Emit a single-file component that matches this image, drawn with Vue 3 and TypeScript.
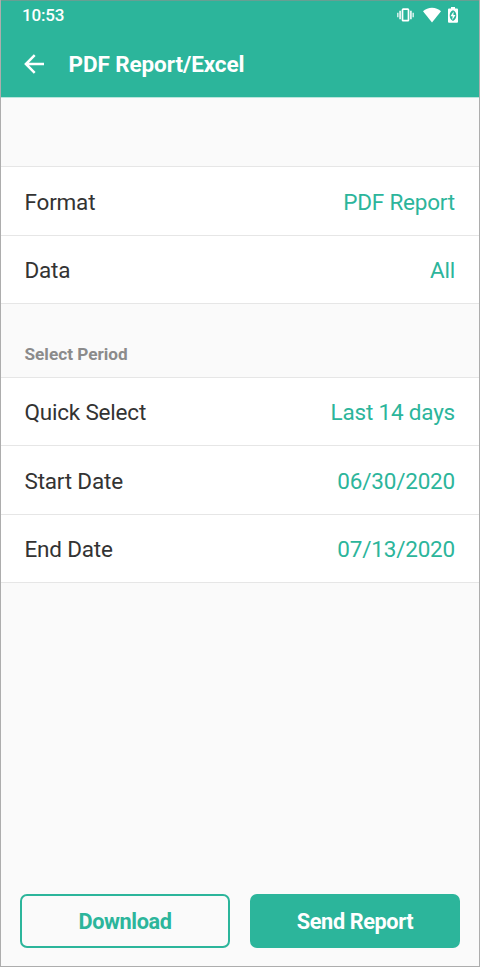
<script setup lang="ts">
interface Row {
  label: string
  value: string
}

const exportRows: Row[] = [
  { label: 'Format', value: 'PDF Report' },
  { label: 'Data', value: 'All' },
]

const periodRows: Row[] = [
  { label: 'Quick Select', value: 'Last 14 days' },
  { label: 'Start Date', value: '06/30/2020' },
  { label: 'End Date', value: '07/13/2020' },
]
</script>

<template>
  <div class="screen">
    <header class="header">
      <div class="status">
        <span class="time">10:53</span>
        <div class="status-icons">
          <svg class="vibrate" width="18" height="14" viewBox="0 0 18 14" fill="none" stroke="#fff">
            <rect x="5.500" y="1.200" width="6" height="11.400" rx="0.7" stroke-width="1.700" />
            <path d="M3.100 2.800v8.400M13.900 2.800v8.400" stroke-width="1.700" opacity=".9" />
            <path d="M.800 4.700v4.600M16.200 4.700v4.600" stroke-width="1.500" opacity=".8" />
          </svg>
          <svg class="wifi" width="18" height="16" viewBox="0 0 18 16" fill="#fff">
            <path d="M9 15.400 0 4.200C2.500 1.900 5.500.7 9 .7s6.500 1.200 9 3.500z" />
          </svg>
          <svg class="battery" width="10" height="16" viewBox="0 0 10 16">
            <path
              fill="#fff"
              fill-rule="evenodd"
              d="M3 0h4v1.500h2q1 0 1 1v12.300q0 1-1 1H1q-1 0-1-1V2.500q0-1 1-1h2zM5 3.300C2.800 4.200 1.700 6.200 1.700 8.600S2.800 13.200 5 14.100C7.200 13.200 8.300 11 8.300 8.600S7.200 4.200 5 3.300z"
            />
            <path fill="#fff" d="M5.600 4.500 2.500 9.200h2.100l-.3 3.800 3.200-4.900H5.400z" />
          </svg>
        </div>
      </div>
      <div class="toolbar">
        <svg class="back" width="20" height="20" viewBox="0 0 20 20" fill="none" stroke="#fff" stroke-width="2.500">
          <path d="M20 10H2M10.700 1.200 1.900 10l8.800 8.800" />
        </svg>
        <h1 class="title">PDF Report/Excel</h1>
      </div>
    </header>

    <main class="content">
      <section class="group export">
        <div v-for="row in exportRows" :key="row.label" class="row">
          <span>{{ row.label }}</span>
          <span class="value">{{ row.value }}</span>
        </div>
      </section>
      <h2 class="section-title">Select Period</h2>
      <section class="group">
        <div v-for="row in periodRows" :key="row.label" class="row">
          <span>{{ row.label }}</span>
          <span class="value">{{ row.value }}</span>
        </div>
      </section>
    </main>

    <footer class="actions">
      <button class="button outline" type="button">Download</button>
      <button class="button solid" type="button">Send Report</button>
    </footer>
  </div>
</template>

<style>
body {
  margin: 0;
}
</style>

<style scoped>
.screen {
  box-sizing: border-box;
  width: 480px;
  height: 967px;
  display: flex;
  flex-direction: column;
  border: 1px solid #adadad;
  background: #fafafa;
  color: #333;
  font-family: Roboto, sans-serif;
}
.header {
  box-sizing: border-box;
  height: 97px;
  flex: none;
  margin-top: -1px;
  border-top: 1px solid #679f93;
  background: #2cb59b;
  color: #fff;
  box-shadow: 0 1px 0 #b9e5dc;
}
.status {
  display: flex;
  justify-content: space-between;
  height: 30px;
  padding: 0 21px;
}
.time {
  font: 500 17px/28px Roboto, sans-serif;
  letter-spacing: -0.200px;
}
.status-icons {
  display: flex;
  align-items: center;
  padding-bottom: 2px;
}
.wifi {
  margin-left: 8px;
}
.battery {
  margin-left: 7px;
}
.toolbar {
  display: flex;
  align-items: center;
  height: 66px;
  padding-left: 23px;
}
.title {
  margin: 0 0 0 24.500px;
  font-size: 22.500px;
  font-weight: 700;
  line-height: 30px;
  letter-spacing: -0.100px;
}
.content {
  flex: 1;
}
.export {
  margin-top: 69px;
}
.group {
  border-top: 1px solid #e6e6e6;
}
.row {
  box-sizing: border-box;
  height: 68.500px;
  display: flex;
  align-items: center;
  justify-content: space-between;
  padding: 2px 24px 0 23.500px;
  border-bottom: 1px solid #e6e6e6;
  background: #fff;
  font-size: 22.500px;
  letter-spacing: -0.200px;
}
.value {
  color: #2cb59b;
}
.section-title {
  height: 72.500px;
  box-sizing: border-box;
  margin: 0;
  padding: 39.500px 23.500px 0;
  color: #8b8b8b;
  font-size: 17.200px;
  font-weight: 700;
  line-height: 20px;
}
.actions {
  display: flex;
  gap: 20px;
  padding: 0 19px 18px;
}
.button {
  flex: 1;
  box-sizing: border-box;
  height: 54px;
  padding: 2px 0 0;
  border: 2px solid #2cb59b;
  border-radius: 7px;
  font: 700 21.700px/28px Roboto, sans-serif;
  letter-spacing: -0.400px;
}
.outline {
  background: transparent;
  color: #2cb59b;
}
.solid {
  background: #2cb59b;
  color: #fff;
}
</style>
